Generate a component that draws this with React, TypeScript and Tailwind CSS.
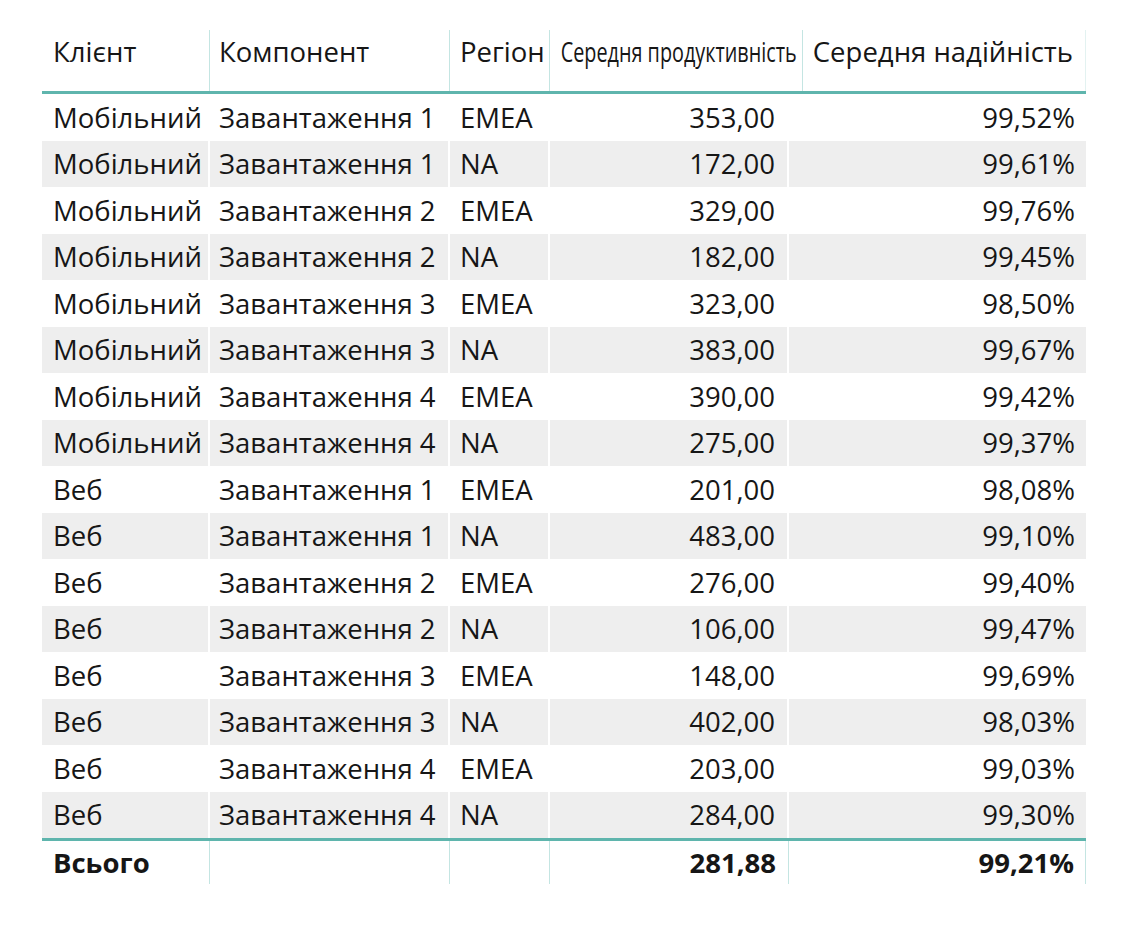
const rows: [string, string, string, string, string][] = [
  ["Мобільний", "Завантаження 1", "EMEA", "353,00", "99,52%"],
  ["Мобільний", "Завантаження 1", "NA", "172,00", "99,61%"],
  ["Мобільний", "Завантаження 2", "EMEA", "329,00", "99,76%"],
  ["Мобільний", "Завантаження 2", "NA", "182,00", "99,45%"],
  ["Мобільний", "Завантаження 3", "EMEA", "323,00", "98,50%"],
  ["Мобільний", "Завантаження 3", "NA", "383,00", "99,67%"],
  ["Мобільний", "Завантаження 4", "EMEA", "390,00", "99,42%"],
  ["Мобільний", "Завантаження 4", "NA", "275,00", "99,37%"],
  ["Веб", "Завантаження 1", "EMEA", "201,00", "98,08%"],
  ["Веб", "Завантаження 1", "NA", "483,00", "99,10%"],
  ["Веб", "Завантаження 2", "EMEA", "276,00", "99,40%"],
  ["Веб", "Завантаження 2", "NA", "106,00", "99,47%"],
  ["Веб", "Завантаження 3", "EMEA", "148,00", "99,69%"],
  ["Веб", "Завантаження 3", "NA", "402,00", "98,03%"],
  ["Веб", "Завантаження 4", "EMEA", "203,00", "99,03%"],
  ["Веб", "Завантаження 4", "NA", "284,00", "99,30%"],
];

const headCols = "grid grid-cols-[168px_240px_100px_253px_283px]";
const bodyCols = "grid grid-cols-[168px_240px_100px_239px_297px]";

export default function App() {
  return (
    <div className="h-[937px] w-[1136px] bg-white pl-[42px] pt-[30px] font-['Open_Sans','Noto_Sans',sans-serif] text-[27.5px] text-[#161616]">
      <div className="w-[1044px]">
        {/* header */}
        <div className={`${headCols} h-[64px] border-b-[3px] border-[#5fb5ad]`}>
          <div className="flex items-center border-r border-[#c4e5e2] pb-[17px] pl-[11px]">Клієнт</div>
          <div className="flex items-center border-r border-[#c4e5e2] pb-[17px] pl-[9px]">Компонент</div>
          <div className="flex items-center border-r border-[#c4e5e2] pb-[17px] pl-[10px]">Регіон</div>
          <div className="flex items-center justify-end overflow-visible border-r border-[#c4e5e2] pb-[17px] pr-[5px]">
            <span className="inline-block origin-right scale-x-[0.72] whitespace-nowrap">Середня продуктивність</span>
          </div>
          <div className="flex items-center justify-end border-r border-[#e3f2f1] pb-[17px] pr-[12px]">Середня надійність</div>
        </div>

        {/* body */}
        <div>
          {rows.map((r, i) => (
            <div
              key={i}
              className={`${bodyCols} h-[46.5px] ${i % 2 === 1 ? "bg-[#eeeeee]" : "bg-white"}`}
            >
              <div className="flex items-center border-r-2 border-white pl-[11px] whitespace-nowrap">{r[0]}</div>
              <div className="flex items-center border-r-2 border-white pl-[9px] whitespace-nowrap">{r[1]}</div>
              <div className="flex items-center border-r-2 border-white pl-[10px]">{r[2]}</div>
              <div className="flex items-center justify-end border-r-2 border-white pr-[12px]">{r[3]}</div>
              <div className="flex items-center justify-end pr-[11px]">{r[4]}</div>
            </div>
          ))}
        </div>

        {/* total */}
        <div className={`${bodyCols} h-[46px] border-t-[3px] border-[#5fb5ad] font-bold`}>
          <div className="flex items-center border-r border-[#c4e5e2] pl-[11px]">Всього</div>
          <div className="border-r border-[#c4e5e2]" />
          <div className="border-r border-[#c4e5e2]" />
          <div className="flex items-center justify-end border-r border-[#c4e5e2] pr-[12px]">281,88</div>
          <div className="flex items-center justify-end border-r border-[#c4e5e2] pr-[11px]">99,21%</div>
        </div>
      </div>
    </div>
  );
}
